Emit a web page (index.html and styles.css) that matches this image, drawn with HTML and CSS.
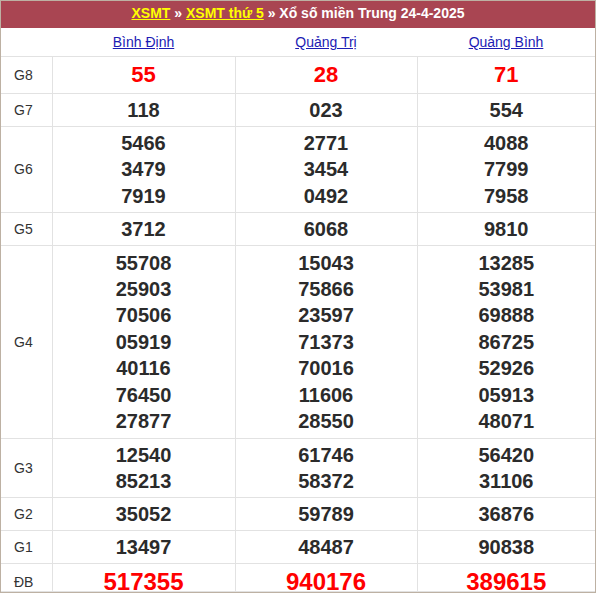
FILE: index.html
```html
<!DOCTYPE html>
<html lang="vi">
<head>
<meta charset="utf-8">
<title>XSMT thứ 5</title>
<link rel="stylesheet" href="styles.css">
</head>
<body>
<div class="box">
  <div class="title">
    <a href="#">XSMT</a> » <a href="#">XSMT thứ 5</a> » Xổ số miền Trung 24-4-2025
  </div>
  <table class="kq">
    <colgroup>
      <col class="c-lbl"><col class="c-a"><col class="c-b"><col class="c-c">
    </colgroup>
    <tr class="prov">
      <th></th>
      <th><a href="#">Bình Định</a></th>
      <th><a href="#">Quảng Trị</a></th>
      <th><a href="#">Quảng Bình</a></th>
    </tr>
    <tr class="r-g8">
      <td class="lbl">G8</td>
      <td class="big">55</td><td class="big">28</td><td class="big">71</td>
    </tr>
    <tr class="r-1">
      <td class="lbl">G7</td>
      <td>118</td><td>023</td><td>554</td>
    </tr>
    <tr class="r-3">
      <td class="lbl">G6</td>
      <td><div>5466</div><div>3479</div><div>7919</div></td>
      <td><div>2771</div><div>3454</div><div>0492</div></td>
      <td><div>4088</div><div>7799</div><div>7958</div></td>
    </tr>
    <tr class="r-1">
      <td class="lbl">G5</td>
      <td>3712</td><td>6068</td><td>9810</td>
    </tr>
    <tr class="r-7">
      <td class="lbl">G4</td>
      <td><div>55708</div><div>25903</div><div>70506</div><div>05919</div><div>40116</div><div>76450</div><div>27877</div></td>
      <td><div>15043</div><div>75866</div><div>23597</div><div>71373</div><div>70016</div><div>11606</div><div>28550</div></td>
      <td><div>13285</div><div>53981</div><div>69888</div><div>86725</div><div>52926</div><div>05913</div><div>48071</div></td>
    </tr>
    <tr class="r-2">
      <td class="lbl">G3</td>
      <td><div>12540</div><div>85213</div></td>
      <td><div>61746</div><div>58372</div></td>
      <td><div>56420</div><div>31106</div></td>
    </tr>
    <tr class="r-1">
      <td class="lbl">G2</td>
      <td>35052</td><td>59789</td><td>36876</td>
    </tr>
    <tr class="r-1">
      <td class="lbl">G1</td>
      <td>13497</td><td>48487</td><td>90838</td>
    </tr>
    <tr class="r-db">
      <td class="lbl">ĐB</td>
      <td class="db">517355</td><td class="db">940176</td><td class="db">389615</td>
    </tr>
  </table>
</div>
</body>
</html>
```

FILE: styles.css
```css
html, body {
  margin: 0;
  padding: 0;
  background: #fff;
}
.box {
  width: 596px;
  height: 593px;
  box-sizing: border-box;
  border: 1px solid #bdb1a3;
  overflow: hidden;
  font-family: "Liberation Sans", Arial, sans-serif;
}
.title {
  height: 27px;
  line-height: 25px;
  background: #a94552;
  color: #fff;
  font-weight: bold;
  font-size: 14px;
  text-align: center;
}
.title a {
  color: #ffff00;
  text-decoration: underline;
}
.kq {
  width: 100%;
  border-collapse: collapse;
  table-layout: fixed;
}
.c-lbl { width: 51px; }
.c-a { width: 183px; }
.c-b { width: 182px; }
.kq td {
  border: 1px solid #e2e2e2;
  text-align: center;
  vertical-align: middle;
  padding: 0;
  font-size: 20px;
  font-weight: bold;
  color: #2b2b2b;
  line-height: 26.4px;
}
.kq tr td:first-child { border-left: none; }
.kq tr td:last-child { border-right: none; }
.kq .lbl {
  text-align: left;
  padding-left: 13px;
  font-size: 14px;
  font-weight: normal;
  color: #333;
}
.prov th {
  height: 28px;
  padding: 0;
  border-bottom: 1px solid #e2e2e2;
  font-weight: normal;
  font-size: 14px;
  vertical-align: middle;
}
.prov a {
  color: #1c1cb4;
  text-decoration: underline;
}
.r-g8 td { height: 36px; }
.r-1 td { height: 32px; }
.r-3 td { height: 85px; }
.r-7 td { height: 192px; }
.r-2 td { height: 58px; }
.kq .r-db td {
  vertical-align: top;
  padding-top: 9px;
  line-height: 18px;
}
.kq .big {
  font-size: 22px;
  color: #f00;
}
.kq .db {
  font-size: 24px;
  color: #f00;
}
```
